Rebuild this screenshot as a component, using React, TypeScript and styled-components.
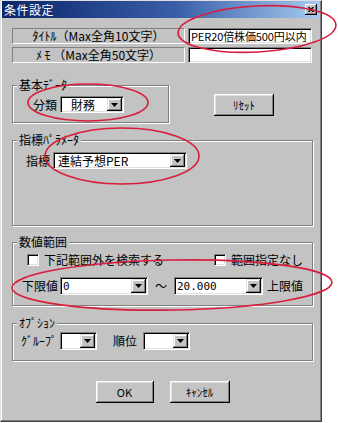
import React from 'react';
import styled, { createGlobalStyle } from 'styled-components';

const GlobalStyle = createGlobalStyle`
  html, body {
    margin: 0;
    padding: 0;
    background: #fff;
  }
  body {
    font-family: 'Noto Sans CJK JP', 'Noto Sans', sans-serif;
    font-size: 12px;
    color: #000;
  }
`;

const Page = styled.div`
  position: relative;
  width: 338px;
  height: 423px;
  overflow: hidden;
  background: #fff;
`;

const Window = styled.div`
  width: 322px;
  height: 422px;
  box-sizing: border-box;
  background: #c3c3c3;
  border-top: 1px solid #dfdfdf;
  border-left: 1px solid #dfdfdf;
  border-right: 1px solid #404040;
  border-bottom: 1px solid #404040;
  box-shadow: inset -1px -1px 0 #808080, inset 1px 1px 0 #fff;
  display: flex;
  flex-direction: column;
`;

const TitleBar = styled.div`
  height: 17px;
  margin: 0 1px;
  padding: 0 3px 0 2px;
  background: linear-gradient(to right, #0a246a 0%, #3a5fa8 55%, #a6caf0 100%);
  display: flex;
  align-items: center;
  justify-content: space-between;
`;

const TitleText = styled.span`
  color: #fff;
  font-size: 12px;
  line-height: 17px;
  letter-spacing: 0.5px;
`;

const CloseButton = styled.div`
  width: 12px;
  height: 11px;
  box-sizing: border-box;
  background: #c3c3c3;
  box-shadow: inset -1px -1px 0 #000, inset 1px 1px 0 #fff, inset -2px -2px 0 #808080;
  display: flex;
  align-items: center;
  justify-content: center;
`;

const Body = styled.div`
  flex: 1;
  display: flex;
  flex-direction: column;
  padding: 10px 8px 0 11px;
`;

const FieldRow = styled.div`
  display: flex;
  gap: 3px;
  & + & {
    margin-top: 3px;
  }
`;

const FieldLabel = styled.div`
  width: 173px;
  height: 16px;
  box-sizing: border-box;
  border-top: 1px solid #808080;
  border-left: 1px solid #808080;
  border-right: 1px solid #fff;
  border-bottom: 1px solid #fff;
  display: flex;
  align-items: center;
  justify-content: center;
  line-height: 14px;
  white-space: pre;
`;

const TextInput = styled.div`
  width: 124px;
  height: 16px;
  box-sizing: border-box;
  background: #fff;
  border-top: 1px solid #808080;
  border-left: 1px solid #808080;
  border-right: 1px solid #fff;
  border-bottom: 1px solid #fff;
  box-shadow: inset 1px 1px 0 #000, inset -1px -1px 0 #dfdfdf;
  padding: 0 0 0 2px;
  font-size: 11px;
  line-height: 14px;
  letter-spacing: -0.1px;
  white-space: nowrap;
  overflow: hidden;
`;

const TopRow = styled.div`
  display: flex;
  align-items: flex-start;
  margin-top: 22px;
`;

const Group = styled.div<{ $w?: number; $pad: string; $mt?: number }>`
  position: relative;
  width: ${(p) => (p.$w ? `${p.$w}px` : 'auto')};
  box-sizing: border-box;
  margin-top: ${(p) => p.$mt ?? 0}px;
  padding: ${(p) => p.$pad};
  border: 1px solid #808080;
  box-shadow: inset 1px 1px 0 #fff, 1px 1px 0 #fff;
`;

const Legend = styled.span`
  position: absolute;
  top: -8px;
  left: 4px;
  padding: 0 2px;
  background: #c3c3c3;
  line-height: 14px;
  white-space: nowrap;
`;

const Line = styled.div<{ $h: number; $between?: boolean; $mt?: number }>`
  display: flex;
  align-items: center;
  height: ${(p) => p.$h}px;
  margin-top: ${(p) => p.$mt ?? 0}px;
  justify-content: ${(p) => (p.$between ? 'space-between' : 'flex-start')};
`;

const Text = styled.span<{ $ml?: number; $w?: number; $center?: boolean }>`
  margin-left: ${(p) => p.$ml ?? 0}px;
  width: ${(p) => (p.$w ? `${p.$w}px` : 'auto')};
  text-align: ${(p) => (p.$center ? 'center' : 'left')};
  line-height: 14px;
  white-space: nowrap;
`;

const Combo = styled.div<{ $w: number; $h?: number; $ml?: number }>`
  width: ${(p) => p.$w}px;
  height: ${(p) => p.$h ?? 18}px;
  margin-left: ${(p) => p.$ml ?? 0}px;
  box-sizing: border-box;
  background: #fff;
  border-top: 1px solid #808080;
  border-left: 1px solid #808080;
  border-right: 1px solid #fff;
  border-bottom: 1px solid #fff;
  box-shadow: inset 1px 1px 0 #000, inset -1px -1px 0 #dfdfdf;
  padding: 1px;
  display: flex;
  flex-shrink: 0;
`;

const ComboValue = styled.span<{ $indent?: number; $mono?: boolean }>`
  flex: 1;
  padding-left: ${(p) => p.$indent ?? 2}px;
  font-family: ${(p) => (p.$mono ? "'DejaVu Sans Mono', monospace" : 'inherit')};
  font-size: ${(p) => (p.$mono ? '11px' : '12px')};
  line-height: 13px;
  display: flex;
  align-items: center;
  white-space: nowrap;
`;

const ComboButton = styled.div`
  width: 15px;
  box-sizing: border-box;
  background: #c3c3c3;
  box-shadow: inset -1px -1px 0 #000, inset 1px 1px 0 #dfdfdf, inset -2px -2px 0 #808080,
    inset 2px 2px 0 #fff;
  display: flex;
  align-items: center;
  justify-content: center;
`;

const CheckBox = styled.span<{ $ml?: number }>`
  width: 12px;
  height: 12px;
  box-sizing: border-box;
  margin-left: ${(p) => p.$ml ?? 0}px;
  margin-right: 5px;
  background: #fff;
  border-top: 1px solid #808080;
  border-left: 1px solid #808080;
  border-right: 1px solid #fff;
  border-bottom: 1px solid #fff;
  box-shadow: inset 1px 1px 0 #000, inset -1px -1px 0 #dfdfdf;
`;

const CheckItem = styled.label`
  display: flex;
  align-items: center;
`;

const PushButton = styled.div<{ $w: number; $ml?: number; $mt?: number }>`
  width: ${(p) => p.$w}px;
  height: 22px;
  margin-left: ${(p) => p.$ml ?? 0}px;
  margin-top: ${(p) => p.$mt ?? 0}px;
  box-sizing: border-box;
  background: #c3c3c3;
  box-shadow: inset -1px -1px 0 #000, inset 1px 1px 0 #fff, inset -2px -2px 0 #808080,
    inset 2px 2px 0 #dfdfdf;
  display: flex;
  align-items: center;
  justify-content: center;
  font-size: 11px;
  line-height: 14px;
`;

const Footer = styled.div`
  display: flex;
  justify-content: center;
  gap: 16px;
  margin-top: 20px;
`;

const Annotations = styled.svg`
  position: absolute;
  left: 0;
  top: 0;
  pointer-events: none;
`;

const Arrow = () => (
  <svg width="7" height="4" viewBox="0 0 7 4">
    <polygon points="0,0 7,0 3.5,4" fill="#000" />
  </svg>
);

type DropdownProps = {
  w: number;
  h?: number;
  ml?: number;
  value?: string;
  indent?: number;
  mono?: boolean;
};

const Dropdown = ({ w, h, ml, value, indent, mono }: DropdownProps) => (
  <Combo $w={w} $h={h} $ml={ml}>
    <ComboValue $indent={indent} $mono={mono}>
      {value}
    </ComboValue>
    <ComboButton>
      <Arrow />
    </ComboButton>
  </Combo>
);

const App: React.FC = () => (
  <Page>
    <GlobalStyle />
    <Window>
      <TitleBar>
        <TitleText>条件設定</TitleText>
        <CloseButton>
          <svg width="6" height="5" viewBox="0 0 6 5">
            <path d="M0.5 0 L5.5 5 M5.5 0 L0.5 5" stroke="#000" strokeWidth="1.4" />
          </svg>
        </CloseButton>
      </TitleBar>
      <Body>
        <FieldRow>
          <FieldLabel>ﾀｲﾄﾙ（Max全角10文字）</FieldLabel>
          <TextInput>PER20倍株価500円以内</TextInput>
        </FieldRow>
        <FieldRow>
          <FieldLabel>ﾒ ﾓ （Max全角50文字）</FieldLabel>
          <TextInput />
        </FieldRow>

        <TopRow>
          <Group $w={157} $pad="10px 0 9px 20px">
            <Legend>基本ﾃﾞｰﾀ</Legend>
            <Line $h={17}>
              <Text>分類</Text>
              <Dropdown w={64} h={17} ml={3} value="財務" indent={9} />
            </Line>
          </Group>
          <PushButton $w={60} $ml={45} $mt={9}>
            ﾘｾｯﾄ
          </PushButton>
        </TopRow>

        <Group $mt={17} $pad="11px 0 56px 13px">
          <Legend>指標ﾊﾟﾗﾒｰﾀ</Legend>
          <Line $h={17}>
            <Text>指標</Text>
            <Dropdown w={134} h={17} ml={3} value="連結予想PER" indent={3} />
          </Line>
        </Group>

        <Group $mt={16} $pad="9px 9px 10px 9px">
          <Legend>数値範囲</Legend>
          <Line $h={16} $between>
            <CheckItem>
              <CheckBox $ml={5} />
              <Text>下記範囲外を検索する</Text>
            </CheckItem>
            <CheckItem>
              <CheckBox />
              <Text>範囲指定なし</Text>
            </CheckItem>
          </Line>
          <Line $h={18} $mt={9}>
            <Text>下限値</Text>
            <Dropdown w={88} ml={2} value="0" indent={1} mono />
            <Text $w={28} $center>
              〜
            </Text>
            <Dropdown w={89} value="20.000" indent={1} mono />
            <Text $ml={4}>上限値</Text>
          </Line>
        </Group>

        <Group $mt={17} $pad="8px 0 10px 8px">
          <Legend>ｵﾌﾟｼｮﾝ</Legend>
          <Line $h={18}>
            <Text>ｸﾞﾙｰﾌﾟ</Text>
            <Dropdown w={37} ml={3} />
            <Text $ml={16}>順位</Text>
            <Dropdown w={47} ml={6} />
          </Line>
        </Group>

        <Footer>
          <PushButton $w={58}>OK</PushButton>
          <PushButton $w={60}>ｷｬﾝｾﾙ</PushButton>
        </Footer>
      </Body>
    </Window>

    <Annotations width="338" height="423" viewBox="0 0 338 423">
      <g fill="none" stroke="#d81e3c" strokeWidth="1.6">
        <ellipse cx="257" cy="29" rx="79" ry="23" transform="rotate(-3 257 29)" />
        <ellipse cx="88" cy="102.5" rx="60" ry="18.5" />
        <ellipse cx="122" cy="156" rx="77" ry="28" />
        <ellipse cx="172" cy="285" rx="160" ry="25" transform="rotate(-1 172 285)" />
      </g>
    </Annotations>
  </Page>
);

export default App;
